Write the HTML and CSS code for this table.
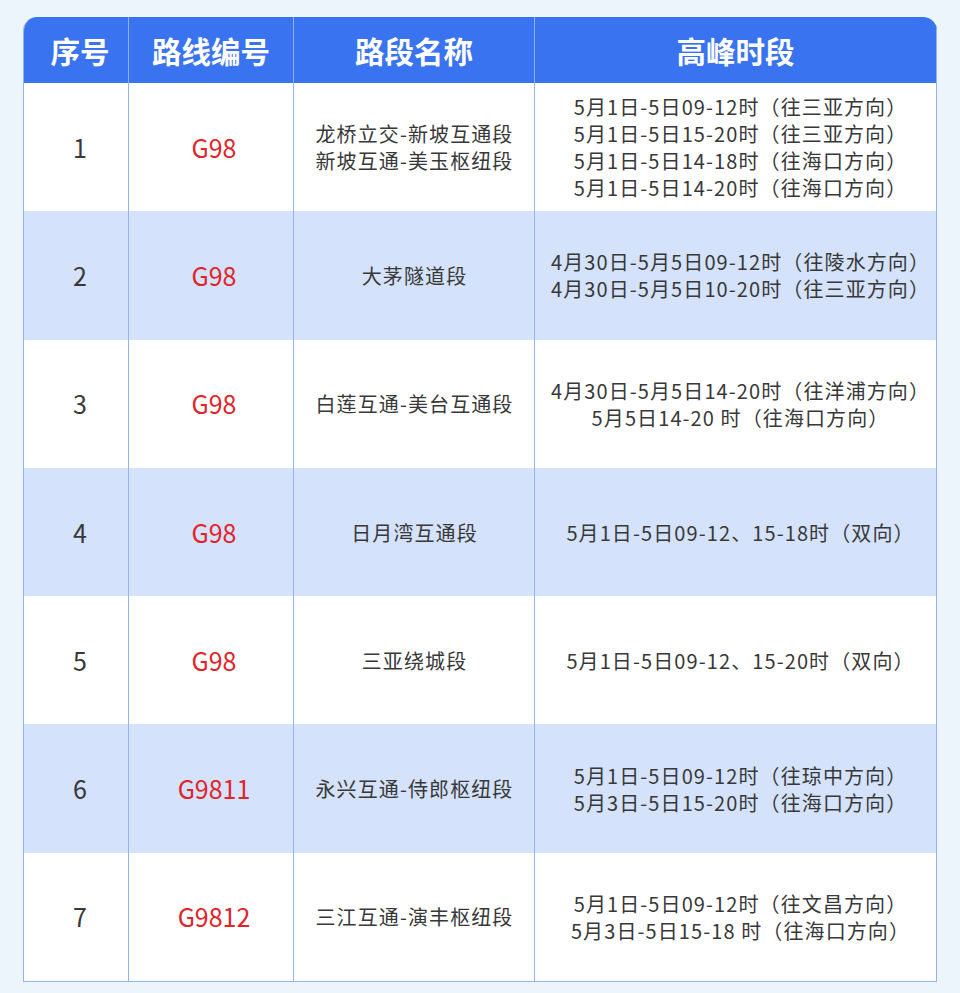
FILE: index.html
```html
<!DOCTYPE html>
<html lang="zh-CN">
<head>
<meta charset="utf-8">
<link rel="stylesheet" href="styles.css">
</head>
<body>
<div class="wrap">
<table class="tbl">
<colgroup><col class="c1"><col class="c2"><col class="c3"><col class="c4"></colgroup>
<thead>
<tr><th class="h1">序号</th><th>路线编号</th><th>路段名称</th><th>高峰时段</th></tr>
</thead>
<tbody>
<tr><td class="num">1</td><td class="code">G98</td><td>龙桥立交-新坡互通段<br>新坡互通-美玉枢纽段</td><td class="time">5月1日-5日09-12时（往三亚方向）<br>5月1日-5日15-20时（往三亚方向）<br>5月1日-5日14-18时（往海口方向）<br>5月1日-5日14-20时（往海口方向）</td></tr>
<tr class="alt"><td class="num">2</td><td class="code">G98</td><td>大茅隧道段</td><td class="time">4月30日-5月5日09-12时（往陵水方向）<br>4月30日-5月5日10-20时（往三亚方向）</td></tr>
<tr><td class="num">3</td><td class="code">G98</td><td>白莲互通-美台互通段</td><td class="time">4月30日-5月5日14-20时（往洋浦方向）<br>5月5日14-20 时（往海口方向）</td></tr>
<tr class="alt"><td class="num">4</td><td class="code">G98</td><td>日月湾互通段</td><td class="time">5月1日-5日09-12、15-18时（双向）</td></tr>
<tr><td class="num">5</td><td class="code">G98</td><td>三亚绕城段</td><td class="time">5月1日-5日09-12、15-20时（双向）</td></tr>
<tr class="alt"><td class="num">6</td><td class="code">G9811</td><td>永兴互通-侍郎枢纽段</td><td class="time">5月1日-5日09-12时（往琼中方向）<br>5月3日-5日15-20时（往海口方向）</td></tr>
<tr><td class="num">7</td><td class="code">G9812</td><td>三江互通-演丰枢纽段</td><td class="time">5月1日-5日09-12时（往文昌方向）<br>5月3日-5日15-18 时（往海口方向）</td></tr>
</tbody>
</table>
</div>
</body>
</html>
```
FILE: styles.css
```css
html, body {
  margin: 0;
  padding: 0;
  background: #edf5fc;
}
body {
  font-family: "Noto Sans CJK SC", "Noto Sans", sans-serif;
  color: #383838;
}
.wrap {
  padding: 17px 24px 0 23px;
}
.tbl {
  width: 913px;
  border-collapse: separate;
  border-spacing: 0;
  table-layout: fixed;
  border-left: 1.5px solid #93b4ec;
  border-bottom: 1.5px solid #93b4ec;
  border-top-left-radius: 14px;
  border-top-right-radius: 14px;
  overflow: hidden;
  background: #fff;
}
.c1 { width: 105px; }
.c2 { width: 165px; }
.c3 { width: 241px; }
.c4 { width: 402px; }
th {
  background: #3a73f0;
  color: #fff;
  font-size: 29.5px;
  font-weight: 700;
  height: 66px;
  padding: 0;
  border-right: 1.5px solid #8fb0f3;
  text-align: center;
  vertical-align: middle;
}
th.h1 { padding-left: 8px; }
th:last-child { border-right: 1.5px solid #93b4ec; }
td {
  height: 128.3px;
  padding: 0 0 0 1px;
  text-align: center;
  vertical-align: middle;
  font-size: 20px;
  letter-spacing: 1.1px;
  line-height: 27px;
  border-right: 1.5px solid #93b4ec;
  color: #383838;
}
tr.alt td { background: #d4e2fb; }
td.num { font-size: 25px; padding-left: 8px; letter-spacing: 0; }
td.code { font-size: 25px; color: #e0242c; padding-left: 6px; letter-spacing: 0; }
td.time { padding-left: 10px; }
```
